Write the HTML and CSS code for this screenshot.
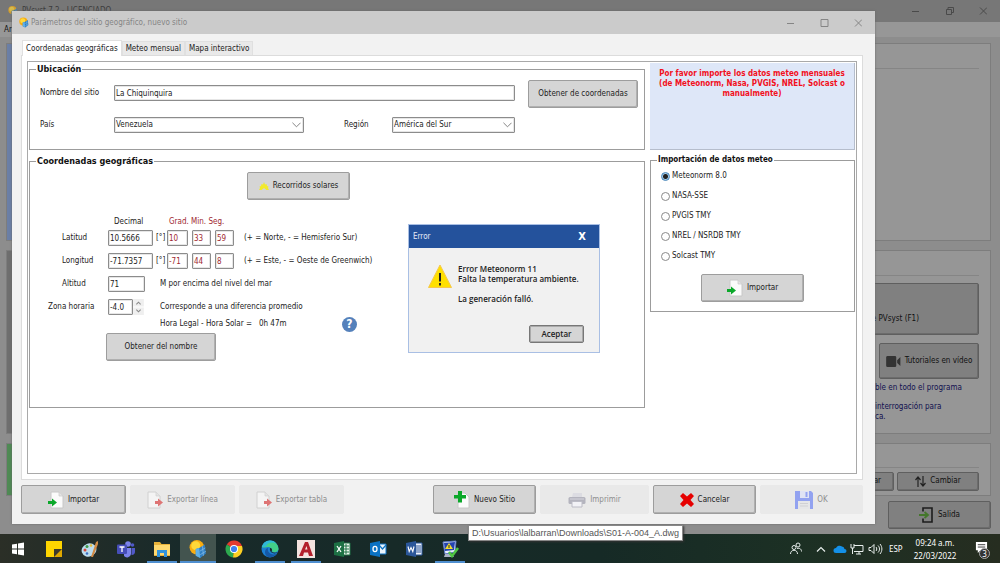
FILE: index.html
```html
<!DOCTYPE html>
<html lang="es">
<head>
<meta charset="utf-8">
<title>PVsyst 7.2</title>
<link rel="stylesheet" href="styles.css">
</head>
<body>
<svg class="defs" aria-hidden="true">
  <symbol id="sun-panel" viewBox="0 0 16 16">
    <circle cx="7" cy="6.500" r="6.500" fill="#f9ad10"/><circle cx="6" cy="5" r="4" fill="#ffd83a"/>
    <path d="M6 8l3-1 5-3 1 8-5 4-4-2z" fill="#2f7fc4"/><path d="M9 7l1 9-4-2V8z" fill="#5fb0e8"/><path d="M9.500 10l5-3M10 13l5-3M12 5.500l.8 8.500" stroke="#8cc3ec" stroke-width=".6" fill="none"/>
  </symbol>
  <symbol id="page-in" viewBox="0 0 16 18">
    <path d="M3 1h8l4 4v12H3z" fill="#fbfbfb" stroke="#c8c8c8"/><path d="M11 1v4h4" fill="#e4e4e4" stroke="#c8c8c8" stroke-width=".7"/>
    <path d="M0 10h4V7.500l5 4-5 4V13H0z" fill="#0ba82a"/>
  </symbol>
  <symbol id="page-out" viewBox="0 0 16 18">
    <path d="M1 1h8l4 4v12H1z" fill="#f4f4f4" stroke="#d0d0d0"/><path d="M9 1v4h4" fill="#e4e4e4" stroke="#d0d0d0" stroke-width=".7"/>
    <path d="M8 10h3V7.500l5 4-5 4V13H8z" fill="#de7474"/>
  </symbol>
</svg>

<div class="desktop">
  <div class="app">
    <header class="app-title">
      <svg class="app-logo"><use href="#sun-panel"/></svg>
      <span class="app-name">PVsyst 7.2 - LICENCIADO</span>
      <svg class="win-controls" viewBox="0 0 76 10"><path d="M1 5.500h7M35.500 3.500h5v5h-5zM37 3V1.500h5.500v5H41M69 1.500l7 7M76 1.500l-7 7" /></svg>
    </header>
    <nav class="app-menu">Ar</nav>
    <main class="app-body">
      <section class="card card-project">
        <div class="tile tile-blue"></div>
        <div class="card-main"><div class="rule"></div></div>
      </section>
      <section class="card card-docs">
        <div class="tile tile-grey"></div>
        <div class="card-main">
          <div class="rule"></div>
          <button class="back-btn help-btn">e PVsyst (F1)</button>
          <button class="back-btn video-btn"><svg class="ico-video" viewBox="0 0 16 12"><rect y="0" width="11" height="12" rx="1.500"/><path d="M12 4.500L15.500 1v10L12 7.500z"/></svg>Tutoriales en vídeo</button>
          <div class="hints"><p>ble en todo el programa</p><p>interrogación para<br>ca.</p></div>
        </div>
      </section>
      <section class="card card-user">
        <div class="tile tile-green"></div>
        <div class="card-main">
          <div class="rule"></div>
          <div class="card-actions"><button class="back-btn">ar</button><button class="back-btn switch-btn"><svg class="ico-switch" viewBox="0 0 11 11"><path d="M3 11V1M.5 4L3 1l2.500 3M8 0v10M5.500 7L8 10l2.500-3" fill="none" stroke="#222" stroke-width="1.200"/></svg>Cambiar</button></div>
        </div>
      </section>
      <button class="back-btn exit-btn"><svg class="ico-exit" viewBox="0 0 14 16"><path d="M4 4.500V1h9v14H4v-3.500" fill="none" stroke="#1c1c1c" stroke-width="1.600"/><path d="M0 8h8M5.500 5l3.500 3-3.500 3" fill="none" stroke="#44772b" stroke-width="1.800"/></svg>Salida</button>
    </main>
  </div>

  <div class="dialog">
    <header class="dialog-title">
      <svg class="dialog-logo"><use href="#sun-panel"/></svg>
      <span>Parámetros del sitio geográfico, nuevo sitio</span>
      <svg class="win-controls" viewBox="0 0 76 10"><path d="M1 5.500h7M35 1.500h7v7h-7zM69 1.500l7 7M76 1.500l-7 7"/></svg>
    </header>
    <div class="dialog-body">
      <div class="tabs"><button class="tab tab-active">Coordenadas geográficas</button><button class="tab">Meteo mensual</button><button class="tab">Mapa interactivo</button></div>
      <div class="page">
        <div class="panel">
          <div class="col">
            <fieldset class="group group-place">
              <legend>Ubicación</legend>
              <div class="place">
                <div class="place-fields">
                  <label for="site">Nombre del sitio</label>
                  <input class="field site" id="site" value="La Chiquinquira">
                  <label for="country">País</label>
                  <span class="pick"><select class="field" id="country"><option>Venezuela</option></select><svg class="chevron" viewBox="0 0 10 6"><path d="M.5.5L5 5 9.500.5"/></svg></span>
                  <label class="region" for="region">Región</label>
                  <span class="pick"><select class="field" id="region"><option>América del Sur</option></select><svg class="chevron" viewBox="0 0 10 6"><path d="M.5.5L5 5 9.500.5"/></svg></span>
                </div>
                <button class="btn from-coords">Obtener de coordenadas</button>
              </div>
            </fieldset>
            <fieldset class="group group-coords">
              <legend>Coordenadas geográficas</legend>
              <button class="btn sun-paths"><svg class="ico-sun" viewBox="0 0 10 8"><path d="M0 8l1-2-.5-1.500L2 4l.5-2L4 2.500 5 0l1 2.500L7.500 2 8 4l1.500.5L9 6l1 2H7.500L5 6 2.500 8z" fill="#f2ea2c"/></svg>Recorridos solares</button>
              <div class="coords">
                <div class="crow heads"><span class="head-dec">Decimal</span><span class="dms">Grad. Min. Seg.</span></div>
                <div class="crow"><label class="name" for="lat">Latitud</label><input class="field dec" id="lat" value="10.5666"><span class="unit">[°]</span><input class="field dms deg" aria-label="Grados de latitud" value="10"><input class="field dms" aria-label="Minutos de latitud" value="33"><input class="field dms" aria-label="Segundos de latitud" value="59"><span class="note">(+ = Norte, - = Hemisferio Sur)</span></div>
                <div class="crow"><label class="name" for="lon">Longitud</label><input class="field dec" id="lon" value="-71.7357"><span class="unit">[°]</span><input class="field dms deg" aria-label="Grados de longitud" value="-71"><input class="field dms" aria-label="Minutos de longitud" value="44"><input class="field dms" aria-label="Segundos de longitud" value="8"><span class="note">(+ = Este, - = Oeste de Greenwich)</span></div>
                <div class="crow"><label class="name" for="alt">Altitud</label><span class="slot"><input class="field alt" id="alt" value="71"></span><span>M por encima del nivel del mar</span></div>
                <div class="crow"><label class="name zone-name" for="zone">Zona horaria</label><span class="slot"><input class="field zone" id="zone" value="-4.0"><svg class="spin" viewBox="0 0 10 15"><path d="M0 0h10v7H0zM0 8h10v7H0z" fill="#efefef"/><path d="M3 5l2-2 2 2M3 10l2 2 2-2" fill="none" stroke="#888"/></svg></span><span>Corresponde a una diferencia promedio</span></div>
              </div>
              <div class="solar"><span class="solar-text">Hora Legal - Hora Solar =&nbsp;&nbsp; 0h 47m</span><button class="help" aria-label="Ayuda">?</button></div>
              <button class="btn from-name">Obtener del nombre</button>
            </fieldset>
          </div>
          <div class="col side">
            <p class="notice">Por favor importe los datos meteo mensuales (de Meteonorm, Nasa, PVGIS, NREL, Solcast o manualmente)</p>
            <fieldset class="group group-meteo">
              <legend>Importación de datos meteo</legend>
              <div class="radios">
                <label><input type="radio" name="src" checked>Meteonorm 8.0</label>
                <label><input type="radio" name="src">NASA-SSE</label>
                <label><input type="radio" name="src">PVGIS TMY</label>
                <label><input type="radio" name="src">NREL / NSRDB TMY</label>
                <label><input type="radio" name="src">Solcast TMY</label>
              </div>
              <button class="btn import-meteo"><svg class="ico-page"><use href="#page-in"/></svg>Importar</button>
            </fieldset>
          </div>
        </div>
      </div>
      <footer class="actions">
        <button class="btn wide"><svg class="ico-page"><use href="#page-in"/></svg>Importar</button>
        <button class="btn wide" disabled><svg class="ico-page"><use href="#page-out"/></svg>Exportar línea</button>
        <button class="btn wide" disabled><svg class="ico-page"><use href="#page-out"/></svg>Exportar tabla</button>
        <span class="spacer"></span>
        <button class="btn"><svg class="ico-page" viewBox="0 0 16 18"><path d="M4 2h7l4 4v11H4z" fill="#fbfbfb" stroke="#c8c8c8"/><path d="M4 0h4v4h4v3.500H8v4H4v-4H0V4h4z" fill="#0ba82a"/></svg>Nuevo Sitio</button>
        <button class="btn print" disabled><svg class="ico-print" viewBox="0 0 18 16"><path d="M4 5l1-4h9v4z" fill="#dcdce2"/><rect x=".5" y="5" width="17" height="7" rx="1.500" fill="#b4b4be"/><path d="M2 7h14" stroke="#d6d6de"/><path d="M4 9.500h10V15H4z" fill="#f2f2f6" stroke="#bcbcc6"/></svg>Imprimir</button>
        <button class="btn"><svg class="ico-x" viewBox="0 0 14 14"><path d="M0 3l3-3 4 3.500L11 0l3 3-3.500 4L14 11l-3 3-4-3.500L3 14l-3-3 3.500-4z" fill="#e60000"/></svg>Cancelar</button>
        <button class="btn" disabled><svg class="ico-disk" viewBox="0 0 18 18"><path d="M0 0h16l2 2v16H0z" fill="#92a2f0"/><path d="M5 0h9v7H5z" fill="#dfe3f4"/><path d="M10.500 1h2v5h-2z" fill="#92a2f0"/><path d="M3 10h12v8H3z" fill="#e6e6e8"/><path d="M5 12.500h8M5 15h8" stroke="#d0d0d4"/></svg>OK</button>
      </footer>
    </div>

    <div class="error" role="alertdialog" aria-labelledby="error-title">
      <header class="error-title"><span id="error-title">Error</span><button class="error-close">X</button></header>
      <div class="error-main">
        <svg class="ico-warn" viewBox="0 0 24 24"><path d="M12 1l11.500 22.500H.5z" fill="#ffe000" stroke="#f5c84c"/><path d="M12 9v8.500M12 19v2.500" stroke="#222" stroke-width="2"/></svg>
        <p>Error Meteonorm 11<br>Falta la temperatura ambiente.<br><br>La generación falló.</p>
      </div>
      <button class="accept">Aceptar</button>
    </div>
  </div>
</div>

<footer class="taskbar">
  <button class="task" aria-label="Inicio"><svg viewBox="0 0 18 18"><path d="M3 4.500l5-.8V8.500H3zM9 3.500l6-1v6H9zM3 9.500h5v4.800l-5-.8zM9 9.500h6v6l-6-1z" fill="#fff"/></svg></button>
  <button class="task" aria-label="Notas"><svg viewBox="0 0 18 18"><path d="M1 1h16v8l-8 8H1z" fill="#ffd500"/><path d="M9 17V9h8v8z" fill="#3d3a2c"/><path d="M9 17l8-8v8z" fill="#e0a800"/></svg></button>
  <button class="task" aria-label="Paint"><svg viewBox="0 0 18 18"><ellipse cx="8" cy="10" rx="7.500" ry="6.500" fill="#bcdcee" transform="rotate(-20 8 10)"/><circle cx="4" cy="10" r="1.500" fill="#d4483c"/><circle cx="6" cy="6.500" r="1.500" fill="#3f9b48"/><circle cx="10" cy="5.500" r="1.300" fill="#e6bb35"/><circle cx="6" cy="13.500" r="1.300" fill="#3d6fc0"/><path d="M10 17l5-15 2-1v3l-5 13z" fill="#d08a45"/></svg></button>
  <button class="task" aria-label="Teams"><svg viewBox="0 0 18 18"><circle cx="11" cy="4" r="2.800" fill="#7b83eb"/><circle cx="15.500" cy="5" r="1.800" fill="#5059c9"/><path d="M7 8h7v6a4 4 0 0 1-7 2z" fill="#7b83eb"/><path d="M14.500 8H18v4a3 3 0 0 1-3.500 3z" fill="#5059c9"/><rect y="4.500" width="10" height="9.500" rx="1" fill="#464eb8"/><path d="M2.500 7h5M5 7v5" stroke="#fff" stroke-width="1.300"/></svg></button>
  <button class="task task-open" aria-label="Explorador"><svg viewBox="0 0 18 18"><path d="M1 2h6l1.500 2H17v12H1z" fill="#e8b23a"/><path d="M1 5h16v10H1z" fill="#ffd970"/><path d="M4 17v-7h10v7h-3v-4H7v4z" fill="#3293dc"/></svg></button>
  <button class="task task-open task-active" aria-label="PVsyst"><svg><use href="#sun-panel"/></svg></button>
  <button class="task" aria-label="Chrome"><svg viewBox="0 0 18 18"><path d="M9 9L1.800 4.500A8.500 8.500 0 0 1 17 6z" fill="#e33b2e"/><path d="M9 9L1.800 4.500A8.500 8.500 0 0 0 8 17.500z" fill="#2da94f"/><path d="M9 9L8 17.500A8.500 8.500 0 0 0 17 6H9z" fill="#fdd023"/><circle cx="9" cy="9" r="4" fill="#fff"/><circle cx="9" cy="9" r="3.100" fill="#3e80f0"/></svg></button>
  <button class="task task-open" aria-label="Edge"><svg viewBox="0 0 18 18"><circle cx="9" cy="9" r="8.500" fill="#1c7fd2"/><path d="M.8 7A8.500 8.500 0 0 1 17.500 9c0 3-4 4-6.500 2.500 1-3-2-5-4.500-4.500S2 8 .8 7z" fill="#42cf88"/><path d="M.8 7A8.500 8.500 0 0 1 9 .5c3 0 5 1 6 3-4-2-9-1-10 3z" fill="#2fb8d8"/><path d="M7 8c-1 5 4 8 9 5.500-2 3-6 4.500-9 3.500-4-2-4-8 0-9z" fill="#1558a5"/><path d="M9 8c2 0 2.500 2 1.500 3.500C12 13 15 13 17 12c-3 3-9 1-8-4z" fill="#1a2c28"/></svg></button>
  <button class="task task-open" aria-label="AutoCAD"><svg viewBox="0 0 18 18"><path d="M0 0h18v18H0z" fill="#f3e3df"/><path d="M2 16L8 2h3l5 14h-4l-1-3.500H7L6 16zM8 9.500h2.500L9.500 6z" fill="#b3202c"/></svg></button>
  <button class="task" aria-label="Excel"><svg viewBox="0 0 18 18"><path d="M9 3h8v12H9z" fill="#e8f2ea" stroke="#217346"/><path d="M10 6h6M10 9h6M10 12h6M13 4v10" stroke="#217346"/><path d="M1 3l10-2v16L1 15z" fill="#1d7044"/><path d="M4 6l4 6M8 6l-4 6" stroke="#fff" stroke-width="1.300"/></svg></button>
  <button class="task" aria-label="Outlook"><svg viewBox="0 0 18 18"><path d="M9 4h8v10H9z" fill="#eaf4fc" stroke="#0d73c5"/><path d="M10 5l3.500 4L17 5" fill="none" stroke="#0d73c5" stroke-width="1.200"/><path d="M1 3l10-2v16L1 15z" fill="#0a72c4"/><ellipse cx="6" cy="9" rx="2" ry="2.600" fill="none" stroke="#fff" stroke-width="1.300"/></svg></button>
  <button class="task" aria-label="Word"><svg viewBox="0 0 18 18"><path d="M9 3h8v12H9z" fill="#eef2fa" stroke="#2b579a"/><path d="M11 6h5M11 8h5M11 10h5M11 12h5" stroke="#2b579a"/><path d="M1 3l10-2v16L1 15z" fill="#2b579a"/><path d="M3 6.500l1.200 5L6 7.500l1.800 4 1.200-5" fill="none" stroke="#fff" stroke-width="1.100"/></svg></button>
  <button class="task task-open" aria-label="DWG"><svg viewBox="0 0 18 18"><path d="M2 2l13-1-1 11-10 2z" fill="#e9eefa" stroke="#5d79c8"/><path d="M3 3l11-1-1 8-9 1z" fill="#2443b0"/><path d="M4 9l4-6 4 6z" fill="#f3dd2d"/><path d="M8 5v3" stroke="#222"/><path d="M4 14h7l2 3H3z" fill="#aab2c4"/><path d="M8 12l3 4 6-8" fill="none" stroke="#4fc443" stroke-width="2.500"/></svg></button>
  <span class="spacer"></span>
  <svg class="tray" viewBox="0 0 94 16" role="img" aria-label="Estado del sistema">
    <g fill="none" stroke="#e8eeec"><circle cx="4" cy="6.500" r="2"/><path d="M.5 13c0-5 7-5 7 0"/><circle cx="8" cy="4" r="2"/><path d="M7 7.500c3-1 4.500 1 4.500 3"/><path d="M27 10.500l4-4 4 4" stroke-width="1.200"/><path d="M64 4.500h9v6h-9M66 13h5M69 11v2M61 3v4h3V3M62.500 7v6"/><path d="M79 6.500h2l3-3v9l-3-3h-2zM86 6c1 1 1 3 0 4M88 4.500c2 2 2 5 0 7M90 3c2.500 3 2.500 7 0 10"/></g>
    <path d="M46 12a2.500 2.500 0 0 1 0-5 4 4 0 0 1 6-1.500 3 3 0 0 1 2.500 2.500 2 2 0 0 1 0 4z" fill="#1490e8"/>
  </svg>
  <span class="lang">ESP</span>
  <time class="clock">09:24 a.m.<br>22/03/2022</time>
  <button class="alerts" aria-label="Notificaciones"><svg viewBox="0 0 14 14"><path d="M1 1h12v9H6l-3 3v-3H1z" fill="#fff"/><path d="M3 4h8M3 6.500h8" stroke="#333"/></svg><span class="badge">3</span></button>
</footer>
<div class="tooltip" role="tooltip">D:\Usuarios\lalbarran\Downloads\S01-A-004_A.dwg</div>
</body>
</html>
```

FILE: styles.css
```css
* { box-sizing: border-box; }
body {
  margin: 0; min-height: 100vh; display: flex; flex-direction: column; position: relative; overflow: hidden;
  font: 8px/10px "DejaVu Sans Condensed", Tahoma, sans-serif; color: #222;
}
button, input, select { font: inherit; color: inherit; margin: 0; padding: 0; }
p { margin: 0; }
.defs { position: absolute; width: 0; height: 0; }
.spacer { flex: 1; }

.desktop { flex: 1; display: flex; position: relative; }
.app { flex: 1; display: flex; flex-direction: column; background: #8d8d8d; color: #111; }
.app-title { height: 22px; display: flex; align-items: center; gap: 4px; padding: 0 13px 0 8px; background: #777; color: #3c3c3c; }
.app-logo { width: 10px; height: 10px; opacity: .7; }
.app-name { flex: 1; }
.win-controls { width: 76px; height: 10px; fill: none; stroke: #4a4a4a; }
.app-menu { height: 15px; padding: 3px 4px; background: #979797; }
.app-body { flex: 1; display: flex; flex-direction: column; align-items: stretch; gap: 9px; padding: 6px 9px 5px 6px; }
.card { display: flex; background: #969696; border: 1px solid #7d7d7d; }
.card-project { flex: 200; }
.card-docs { flex: 185; }
.card-user { flex: 52; }
.tile { width: 200px; }
.tile-blue { background: #6b7fa6; }
.tile-grey { background: #6e6e6e; }
.tile-green { background: #4f8a54; }
.card-main { flex: 1; display: flex; flex-direction: column; align-items: flex-end; padding: 24px 11px 0 0; }
.rule { width: 240px; height: 1px; background: #858585; }
.back-btn { background: #808080; border: 1px solid #5f5f5f; border-radius: 2px; box-shadow: inset -1px -1px #6c6c6c; display: flex; align-items: center; justify-content: center; }
.help-btn { width: 220px; height: 52px; margin-top: 7px; padding: 20px 59px 0 0; justify-content: flex-end; }
.video-btn { width: 100px; height: 36px; margin-top: 8px; gap: 4px; }
.ico-video { width: 15px; height: 11px; fill: #333; }
.hints { width: 104px; padding-top: 4px; color: #10104f; white-space: nowrap; }
.hints p + p { padding-top: 9px; }
.card-user .card-main { padding-top: 23px; }
.card-actions { display: flex; gap: 3px; margin-top: 4px; }
.card-actions .back-btn { width: 82px; height: 19px; gap: 4px; }
.card-actions .back-btn:first-child { justify-content: flex-end; padding-right: 12px; }
.ico-switch { width: 11px; height: 11px; }
.exit-btn { align-self: flex-end; width: 103px; height: 28px; gap: 5px; margin-top: -4px; }
.ico-exit { width: 14px; height: 16px; }

.dialog { position: absolute; inset: 11px 125px 10px 12px; display: flex; flex-direction: column; background: #f2f2f2; box-shadow: 0 0 2px #666; }
.dialog-title { height: 23px; display: flex; align-items: center; gap: 2px; padding: 0 13px 0 7px; background: #cbcbcb; color: #858585; }
.dialog-title span { flex: 1; }
.dialog-title .win-controls { stroke: #858585; }
.dialog-logo { width: 10px; height: 11px; }
.dialog-body { flex: 1; display: flex; flex-direction: column; padding: 6px 12px 10px 9px; }
.tabs { display: flex; align-items: flex-end; padding-left: 1px; }
.tab { height: 14px; padding: 0 3px; border: 1px solid #e0e0e0; border-bottom: 0; background: #e9e9e9; color: #222; }
.tab-active { height: 16px; margin-bottom: -1px; background: #fff; z-index: 1; }
.page { flex: 1; display: flex; background: #fff; border: 1px solid #dcdcdc; padding: 5px; }
.panel { flex: 1; display: grid; grid-template-columns: 1fr 205px; gap: 5px; align-items: start; border: 1px solid #a9a9a9; padding: 1px; }
.col { display: flex; flex-direction: column; gap: 5px; }
.group { margin: 0; padding: 0; border: 1px solid #9c9c9c; min-width: 0; }
legend { margin-left: 6px; padding: 0 1px; font: bold 9px/12px "DejaVu Sans Condensed", sans-serif; color: #111; }
.group-place { height: 87px; }
.group-coords { height: 253px; }
.group-meteo { height: 158px; }
.group-meteo legend { font-size: 8px; }

.field { width: 100%; height: 16px; padding: 0 1px; border: 1px solid #8c8c8c; border-radius: 1px; box-shadow: inset 0 0 0 1px #e6e6e6; background: #fff; }
select.field { appearance: none; }
.pick { position: relative; display: flex; }
.chevron { position: absolute; right: 3px; top: 5px; width: 9px; height: 6px; fill: none; stroke: #777; }
.btn { display: flex; align-items: center; justify-content: center; gap: 4px; height: 28px; background: #d5d5d5; border: 1px solid #9d9d9d; border-radius: 2px; box-shadow: inset -1px -1px #b0b0b0; }
.btn:disabled { background: #e9e9e9; border-color: #e9e9e9; box-shadow: none; color: #8e8e8e; }

.place { display: flex; gap: 13px; padding: 5px 6px 0 10px; align-items: flex-start; }
.place-fields { flex: 1; display: grid; grid-template-columns: 74px 190fr 88px 123fr; row-gap: 16px; align-items: center; padding-top: 5px; }
.site { grid-column: span 3; }
.region { padding-left: 40px; }
.from-coords { width: 110px; }

.sun-paths { width: 103px; margin: 5px 0 0 217px; }
.ico-sun { width: 10px; height: 8px; }
.coords { display: flex; flex-direction: column; gap: 7px; padding-top: 17px; }
.crow { display: flex; align-items: center; height: 16px; }
.heads { height: 10px; margin-bottom: -4px; }
.head-dec { margin-left: 84px; width: 55px; }
.dms { color: #a02830; }
.name { width: 78px; padding-left: 32px; }
.zone-name { padding-left: 18px; }
.dec { width: 45px; }
.unit { width: 14px; padding-left: 3px; white-space: nowrap; }
.crow .field.dms { width: 19px; margin-right: 4px; }
.crow .field.deg { width: 21px; }
.note { padding-left: 6px; }
.slot { display: flex; width: 52px; }
.alt { width: 37px; }
.zone { width: 25px; }
.spin { width: 11px; height: 16px; }
.solar { display: flex; align-items: center; height: 18px; margin-left: 130px; }
.solar-text { width: 182px; }
.help { width: 15px; height: 15px; border: 0; border-radius: 50%; background: #5581bb; color: #fff; font-size: 12px; line-height: 15px; font-weight: bold; }
.from-name { width: 110px; margin-left: 76px; }

.notice { height: 87px; padding: 6px 8px; background: #dee7f8; border: solid #b5bdcc; border-width: 0 1px 1px 0; color: #f2101c; font-weight: bold; text-align: center; }
.side { gap: 4px; }
.radios { display: flex; flex-direction: column; gap: 8px; padding: 4px 0 0 10px; }
.radios label { display: flex; align-items: center; gap: 2px; height: 12px; }
.radios input { appearance: none; width: 9px; height: 9px; border: 1px solid #8a8a8a; border-radius: 50%; background: #fff; }
.radios input:checked { border-color: #4484b8; background: radial-gradient(#222 0 2px, #a7cbe8 3px); }
.import-meteo { width: 103px; margin: 12px 0 0 50px; }
.ico-page { width: 16px; height: 18px; }

.actions { display: flex; gap: 4px; padding-top: 5px; }
.actions .btn { width: 103px; height: 29px; }
.actions .wide { width: 105px; }
.actions .print { width: 109px; }
.ico-print { width: 18px; height: 16px; }
.ico-x { width: 14px; height: 14px; }
.ico-disk { width: 18px; height: 18px; }

.error { position: absolute; left: 396px; top: 213px; width: 192px; border: 1px solid #a9bfe4; background: #f1f1f1; display: flex; flex-direction: column; }
.error-title { display: flex; justify-content: space-between; align-items: center; height: 23px; padding: 0 13px 0 4px; background: #24529c; color: #e6ecf8; }
.error-close { border: 0; background: none; color: #fff; font-size: 11px; font-weight: bold; }
.error-main { display: flex; gap: 6px; padding: 16px 0 0 19px; font-family: "Open Sans", sans-serif; font-weight: 600; }
.ico-warn { width: 24px; height: 24px; }
.accept { align-self: flex-end; width: 55px; height: 18px; margin: 21px 15px 9px 0; background: #d5d5d5; border: 1px solid #777; box-shadow: inset 0 0 0 1px #aaa; border-radius: 2px; font-family: "Open Sans", sans-serif; font-weight: 600; }

.taskbar { height: 29px; display: flex; align-items: center; background: linear-gradient(90deg, #2b2f27, #182a2a 18%, #162a26 60%, #1c3024 80%, #262d20); color: #fff; font-family: "Noto Sans", sans-serif; }
.task { width: 36px; height: 29px; border: 0; background: none; display: flex; align-items: center; justify-content: center; }
.task svg { width: 18px; height: 18px; }
.task-open { background: linear-gradient(#4f8fd0, #4f8fd0) center bottom / 30px 2px no-repeat; }
.task-active { background-color: #43544f; background-size: 36px 2px; }
.tray { width: 94px; height: 16px; }
.lang { width: 23px; padding-left: 5px; }
.clock { width: 56px; text-align: center; line-height: 13px; }
.alerts { position: relative; width: 37px; height: 29px; border: 0; background: none; }
.alerts svg { width: 13px; height: 13px; }
.badge { position: absolute; left: 16px; top: 14px; width: 11px; height: 11px; border: 1px solid #aaa; border-radius: 50%; background: #333; line-height: 9px; color: #fff; text-align: center; }
.tooltip { position: absolute; left: 468px; bottom: 22px; padding: 1px 3px; background: #fff; border: 1px solid #888; box-shadow: 1px 1px 2px #333; color: #555; font: 9px/12px "Liberation Sans", sans-serif; }
```
